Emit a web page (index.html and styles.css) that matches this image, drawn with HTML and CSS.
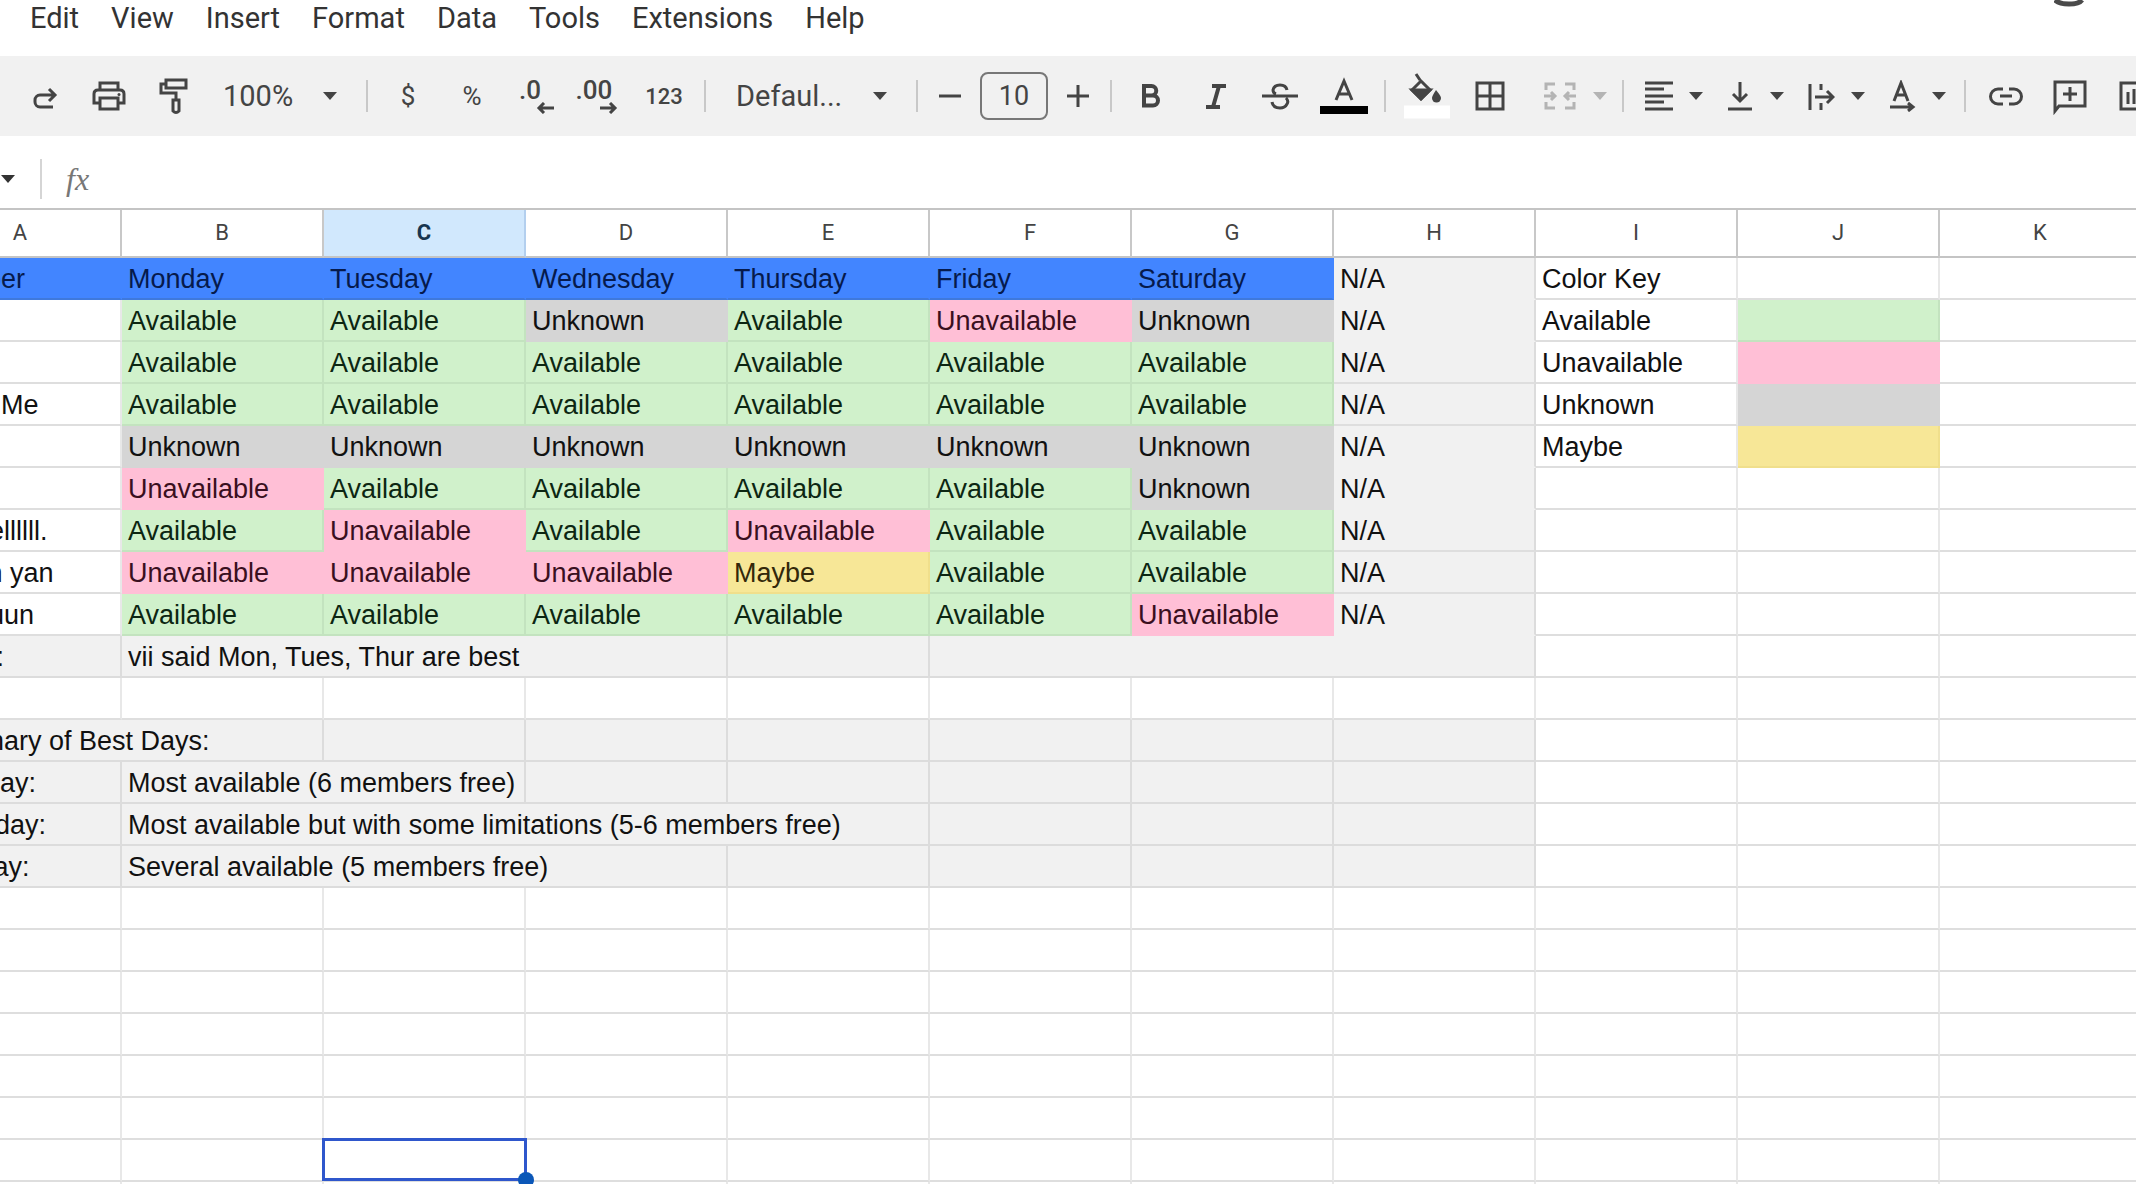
FILE: index.html
```html
<!DOCTYPE html>
<html lang="en">
<head>
<meta charset="utf-8">
<title>Availability sheet</title>
<link rel="stylesheet" href="styles.css">
</head>
<body>
<svg class="sprite">
  <symbol id="caret" viewBox="0 0 16 8"><path d="M1 0h14L8 8z" fill="currentColor"/></symbol>
</svg>
<div class="app">
  <header class="menubar">
    <nav class="menus" aria-label="Menu">
      <button>Edit</button><button>View</button><button>Insert</button><button>Format</button><button>Data</button><button>Tools</button><button>Extensions</button><button>Help</button>
    </nav>
    <svg class="status" width="30" height="8" viewBox="0 0 30 8"><path d="M1 0Q5 4 15 4T28 0" fill="none" stroke="#4a4a4a" stroke-width="5"/></svg>
  </header>

  <div class="toolbar" role="toolbar" aria-label="Formatting">
    <button class="tool" aria-label="Redo"><svg width="28" height="32" viewBox="0 0 28 32"><path d="M22 27H9a5 5 0 0 1-5-5v-2a5 5 0 0 1 5-5h13M18 9l6 6-6 6" /></svg></button>
    <button class="tool" aria-label="Print"><svg width="36" height="32" viewBox="0 0 36 32"><path d="M9 10V3h18v7M9 23H3V14q0-4 4-4h22q4 0 4 4v9h-6M9 18h18v11H9z"/><circle cx="28" cy="14.500" r="1.500" fill="currentColor" stroke="none"/></svg></button>
    <button class="tool" aria-label="Paint format"><svg width="32" height="40" viewBox="0 0 32 40"><path d="M9 4h20v8H9zM9 8H4v9h15v7M16 24h6v11q-3 3-6 0z"/></svg></button>
    <label class="picker zoom"><select aria-label="Zoom"><option>100%</option></select><svg class="caret"><use href="#caret"/></svg></label>
    <span class="sep"></span>
    <button class="tool glyph" aria-label="Currency">$</button>
    <button class="tool glyph" aria-label="Percent">%</button>
    <button class="tool decimals" aria-label="Decrease decimals"><span>.0</span><svg width="18" height="12" viewBox="0 0 18 12"><path d="M18 6H3M8 1L3 6l5 5"/></svg></button>
    <button class="tool decimals" aria-label="Increase decimals"><span>.00</span><svg width="18" height="12" viewBox="0 0 18 12"><path d="M0 6h15M10 1l5 5-5 5"/></svg></button>
    <button class="tool number">123</button>
    <span class="sep"></span>
    <label class="picker font"><select aria-label="Font"><option>Defaul...</option></select><svg class="caret"><use href="#caret"/></svg></label>
    <span class="sep"></span>
    <button class="step" aria-label="Smaller"><svg width="22" height="22" viewBox="0 0 22 22"><path d="M0 11h22"/></svg></button>
    <input class="size" aria-label="Font size" value="10">
    <button class="step" aria-label="Larger"><svg width="22" height="22" viewBox="0 0 22 22"><path d="M0 11h22M11 0v22"/></svg></button>
    <span class="sep"></span>
    <button class="tool" aria-label="Bold"><svg width="28" height="32" viewBox="0 0 28 32"><path d="M6 6h7.500a4.500 4.500 0 0 1 0 9.500H6zM6 15.500h9a5 5 0 0 1 0 10H6z" stroke-width="4"/></svg></button>
    <button class="tool" aria-label="Italic"><svg width="28" height="32" viewBox="0 0 28 32"><path d="M10 6h14M4 27h14M17 6l-6 21" stroke-width="4"/></svg></button>
    <button class="tool" aria-label="Strikethrough"><svg width="36" height="32" viewBox="0 0 36 32"><path d="M0 16h36M25 10q-1-5-7-5t-7 5q0 3 3 4M24 18q3 3 1 6-2 4-7 4-7 0-8-6"/></svg></button>
    <button class="tool ink" aria-label="Text color"><svg width="48" height="40" viewBox="0 0 48 40"><path d="M16 24L24 5l8 19M19 18h10"/><path d="M0 34h48" stroke="#000" stroke-width="8"/></svg></button>
    <span class="sep"></span>
    <button class="tool" aria-label="Fill color"><svg width="48" height="48" viewBox="0 0 48 48"><path d="M2 40h46" stroke="#fff" stroke-width="13"/><path d="M14 2l4 6M19 9l9 9-9 9-9-9z"/><path d="M10 18h18l-9 9z" fill="currentColor"/><path d="M34 18q5 6 5 8a4.500 4.500 0 0 1-9 0q0-2 4-8z" fill="currentColor" stroke="none"/></svg></button>
    <button class="tool" aria-label="Borders"><svg width="32" height="32" viewBox="0 0 32 32"><path d="M3 3h26v26H3zM16 3v26M3 16h26"/></svg></button>
    <button class="split merge" disabled aria-label="Merge cells"><svg width="34" height="32" viewBox="0 0 34 32"><path d="M3 10V4h9M22 4h9v6M3 22v6h9M22 28h9v-6M1 16h11M8 12l4 4-4 4M33 16H22M26 12l-4 4 4 4"/></svg><svg class="caret"><use href="#caret"/></svg></button>
    <span class="sep"></span>
    <button class="split" aria-label="Horizontal align"><svg width="28" height="32" viewBox="0 0 28 32"><path d="M0 3h28M0 9h19M0 16h28M0 22h19M0 29h28"/></svg><svg class="caret"><use href="#caret"/></svg></button>
    <button class="split" aria-label="Vertical align"><svg width="28" height="32" viewBox="0 0 28 32"><path d="M14 2v18M7 14l7 7 7-7M2 29h24"/></svg><svg class="caret"><use href="#caret"/></svg></button>
    <button class="split" aria-label="Text wrapping"><svg width="28" height="32" viewBox="0 0 28 32"><path d="M3 4v26M14 4v6M14 23v7M8 17h17M20 11l6 6-6 6"/></svg><svg class="caret"><use href="#caret"/></svg></button>
    <button class="split" aria-label="Text rotation"><svg width="28" height="32" viewBox="0 0 28 32"><path d="M6 21l7-18 7 18M8 15h10M2 27h22M20 23l5 4-5 4"/></svg><svg class="caret"><use href="#caret"/></svg></button>
    <span class="sep"></span>
    <button class="tool" aria-label="Insert link"><svg width="34" height="32" viewBox="0 0 34 32"><path d="M14 9H9a7 7 0 0 0 0 15h5M20 9h5a7 7 0 0 1 0 15h-5M11 16h12"/></svg></button>
    <button class="tool" aria-label="Insert comment"><svg width="36" height="38" viewBox="0 0 36 38"><path d="M3 34V5h30v24H7zM18 10v14M11 17h14"/></svg></button>
    <button class="tool" aria-label="Insert chart"><svg width="32" height="32" viewBox="0 0 32 32"><path d="M3 3h26v26H3zM10 12v12M16 9v15M22 16v8"/></svg></button>
  </div>

  <div class="formula">
    <button class="namebox" aria-label="Named ranges"><svg class="caret"><use href="#caret"/></svg></button>
    <span class="rule"></span>
    <label class="fx" for="formula">fx</label>
    <input id="formula" class="entry">
  </div>

  <main class="sheet">
    <table>
      <thead>
        <tr><th>A</th><th>B</th><th class="current">C</th><th>D</th><th>E</th><th>F</th><th>G</th><th>H</th><th>I</th><th>J</th><th>K</th></tr>
      </thead>
      <tbody>
        <tr><td class="head">Member</td><td class="head">Monday</td><td class="head">Tuesday</td><td class="head">Wednesday</td><td class="head">Thursday</td><td class="head">Friday</td><td class="head">Saturday</td><td class="na">N/A</td><td>Color Key</td><td></td><td></td></tr>
        <tr><td></td><td class="yes">Available</td><td class="yes">Available</td><td class="unk">Unknown</td><td class="yes">Available</td><td class="no">Unavailable</td><td class="unk">Unknown</td><td class="na">N/A</td><td>Available</td><td class="yes"></td><td></td></tr>
        <tr><td></td><td class="yes">Available</td><td class="yes">Available</td><td class="yes">Available</td><td class="yes">Available</td><td class="yes">Available</td><td class="yes">Available</td><td class="na lined">N/A</td><td>Unavailable</td><td class="no"></td><td></td></tr>
        <tr><td>about Me</td><td class="yes">Available</td><td class="yes">Available</td><td class="yes">Available</td><td class="yes">Available</td><td class="yes">Available</td><td class="yes">Available</td><td class="na lined">N/A</td><td>Unknown</td><td class="unk"></td><td></td></tr>
        <tr><td></td><td class="unk">Unknown</td><td class="unk">Unknown</td><td class="unk">Unknown</td><td class="unk">Unknown</td><td class="unk">Unknown</td><td class="unk">Unknown</td><td class="na">N/A</td><td>Maybe</td><td class="maybe"></td><td></td></tr>
        <tr><td></td><td class="no">Unavailable</td><td class="yes">Available</td><td class="yes">Available</td><td class="yes">Available</td><td class="yes">Available</td><td class="unk">Unknown</td><td class="na">N/A</td><td></td><td></td><td></td></tr>
        <tr><td>Rachellllll.</td><td class="yes">Available</td><td class="no">Unavailable</td><td class="yes">Available</td><td class="no">Unavailable</td><td class="yes">Available</td><td class="yes">Available</td><td class="na lined">N/A</td><td></td><td></td><td></td></tr>
        <tr><td>Susan yan</td><td class="no">Unavailable</td><td class="no">Unavailable</td><td class="no">Unavailable</td><td class="maybe">Maybe</td><td class="yes">Available</td><td class="yes">Available</td><td class="na lined">N/A</td><td></td><td></td><td></td></tr>
        <tr><td>Shuuuun</td><td class="yes">Available</td><td class="yes">Available</td><td class="yes">Available</td><td class="yes">Available</td><td class="yes">Available</td><td class="no">Unavailable</td><td class="na">N/A</td><td></td><td></td><td></td></tr>
        <tr><td class="note">Notes:</td><td class="note" colspan="3">vii said Mon, Tues, Thur are best</td><td class="note"></td><td class="note" colspan="3"></td><td></td><td></td><td></td></tr>
        <tr><td></td><td></td><td></td><td></td><td></td><td></td><td></td><td></td><td></td><td></td><td></td></tr>
        <tr><td class="note" colspan="2">Summary of Best Days:</td><td class="note"></td><td class="note"></td><td class="note"></td><td class="note"></td><td class="note"></td><td class="note"></td><td></td><td></td><td></td></tr>
        <tr><td class="note">Tuesday:</td><td class="note" colspan="2">Most available (6 members free)</td><td class="note"></td><td class="note"></td><td class="note"></td><td class="note"></td><td class="note"></td><td></td><td></td><td></td></tr>
        <tr><td class="note">Thursday:</td><td class="note" colspan="4">Most available but with some limitations (5-6 members free)</td><td class="note"></td><td class="note"></td><td class="note"></td><td></td><td></td><td></td></tr>
        <tr><td class="note">Monday:</td><td class="note" colspan="3">Several available (5 members free)</td><td class="note"></td><td class="note"></td><td class="note"></td><td class="note"></td><td></td><td></td><td></td></tr>
        <tr><td></td><td></td><td></td><td></td><td></td><td></td><td></td><td></td><td></td><td></td><td></td></tr>
        <tr><td></td><td></td><td></td><td></td><td></td><td></td><td></td><td></td><td></td><td></td><td></td></tr>
        <tr><td></td><td></td><td></td><td></td><td></td><td></td><td></td><td></td><td></td><td></td><td></td></tr>
        <tr><td></td><td></td><td></td><td></td><td></td><td></td><td></td><td></td><td></td><td></td><td></td></tr>
        <tr><td></td><td></td><td></td><td></td><td></td><td></td><td></td><td></td><td></td><td></td><td></td></tr>
        <tr><td></td><td></td><td></td><td></td><td></td><td></td><td></td><td></td><td></td><td></td><td></td></tr>
        <tr><td></td><td></td><td class="selected"></td><td></td><td></td><td></td><td></td><td></td><td></td><td></td><td></td></tr>
        <tr><td></td><td></td><td></td><td></td><td></td><td></td><td></td><td></td><td></td><td></td><td></td></tr>
      </tbody>
    </table>
  </main>
</div>
</body>
</html>
```
FILE: styles.css
```css
* { box-sizing: border-box; }

body {
  margin: 0;
  background: #fff;
  color: #444;
  font-family: Roboto, "Liberation Sans", sans-serif;
}

button, select, input {
  margin: 0;
  padding: 0;
  border: 0;
  background: none;
  color: inherit;
  font: inherit;
}

.sprite { display: none; }

.app {
  display: flex;
  flex-direction: column;
  height: 100vh;
  overflow: hidden;
}

.menubar {
  display: flex;
  flex: none;
  justify-content: space-between;
  align-items: flex-start;
  height: 56px;
  padding: 0 52px 0 30px;
}

.menus {
  display: flex;
  gap: 32px;
  color: #333;
  font-size: 29px;
  line-height: 36px;
}

.toolbar {
  display: flex;
  flex: none;
  align-items: center;
  height: 80px;
  padding-left: 13px;
  background: #f1f1f1;
}

.toolbar > * { flex: none; }

.toolbar svg {
  fill: none;
  stroke: currentColor;
  stroke-width: 3;
}

.tool {
  display: flex;
  align-items: center;
  justify-content: center;
  width: 64px;
  height: 60px;
}

.glyph { font-size: 26px; }

.number {
  font-size: 22px;
  font-weight: 500;
}

.decimals {
  flex-direction: column;
  font-size: 26px;
  font-weight: 500;
  line-height: 24px;
}

.decimals span { margin-right: 12px; }
.decimals svg { margin-left: 18px; }

.sep {
  width: 2px;
  height: 32px;
  margin: 0 8px;
  background: #c8c8c8;
}

.picker {
  display: grid;
  align-items: center;
  font-size: 29px;
}

.picker > * { grid-area: 1 / 1; }

.picker select {
  appearance: none;
  width: 100%;
  height: 60px;
}

.zoom { width: 153px; }
.zoom select { padding-left: 18px; }
.font { width: 194px; }
.font select { padding-left: 22px; }

.toolbar .caret, .formula .caret {
  width: 16px;
  height: 8px;
  stroke: none;
}

.picker .caret {
  justify-self: end;
  margin-right: 20px;
  pointer-events: none;
}

.step {
  display: flex;
  align-items: center;
  justify-content: center;
  width: 48px;
  height: 48px;
}

.size {
  width: 68px;
  height: 48px;
  margin: 0 6px;
  border: 2px solid #777;
  border-radius: 8px;
  font-size: 27px;
  text-align: center;
}

.split {
  display: flex;
  align-items: center;
  gap: 15px;
  width: 81px;
  height: 60px;
  padding-left: 13px;
}

.merge {
  gap: 15px;
  margin-left: 11px;
  padding-left: 10px;
  color: #b4b4b4;
}

.formula {
  display: flex;
  flex: none;
  align-items: center;
  height: 72px;
  padding-top: 14px;
}

.namebox {
  display: flex;
  color: #333;
}

.rule {
  width: 2px;
  height: 40px;
  margin: 0 24px;
  background: #d5d5d5;
}

.fx {
  color: #777;
  font: italic 32px "Liberation Serif", serif;
}

.entry {
  flex: 1;
  height: 48px;
  margin-left: 16px;
}

.sheet {
  flex: 1;
  min-height: 0;
  overflow: hidden;
  color: #111;
  font: 27px/30px "Liberation Sans", Arial, sans-serif;
}

table {
  width: 2222px;
  margin-left: -80px;
  border-top: 2px solid #c4c4c4;
  border-collapse: separate;
  border-spacing: 0;
  table-layout: fixed;
}

th {
  height: 48px;
  padding: 0;
  border-right: 2px solid #c8c8c8;
  border-bottom: 2px solid #c4c4c4;
  color: #444;
  font: 22px/30px Roboto, sans-serif;
}

.current {
  background: #d1e8fd;
  border-right-color: #b3cfee;
  color: #173550;
  font-weight: 700;
}

td {
  height: 42px;
  padding: 6px 0 4px 6px;
  border-right: 2px solid #e8e8e8;
  border-bottom: 2px solid #dedede;
  white-space: nowrap;
}

.head {
  background: #4285ff;
  border-color: #4285ff;
  border-bottom-color: #3f79dc;
  color: #061a4c;
}

.yes {
  background: #d0f1cb;
  border-color: #c3e3bf;
  color: #0c2612;
}

.no {
  background: #ffbfd6;
  border-color: #ffbfd6;
  color: #3a0f20;
}

.unk {
  background: #d5d5d5;
  border-color: #d5d5d5;
}

.maybe {
  background: #f7e797;
  border-color: #f0df8c;
  color: #33280a;
}

.na {
  background: #f1f1f1;
  border-right-color: #dcdcdc;
  border-bottom-color: #f1f1f1;
}

.lined { border-bottom-color: #dedede; }

.note {
  background: #f1f1f1;
  border-color: #dcdcdc;
}

.selected { position: relative; }

.selected::before {
  content: "";
  position: absolute;
  inset: -2px -3px -1px -2px;
  border: 3px solid #2f57cc;
}

.selected::after {
  content: "";
  position: absolute;
  right: -10px;
  bottom: -8px;
  width: 16px;
  height: 16px;
  border-radius: 50%;
  background: #0b57b8;
}
```
